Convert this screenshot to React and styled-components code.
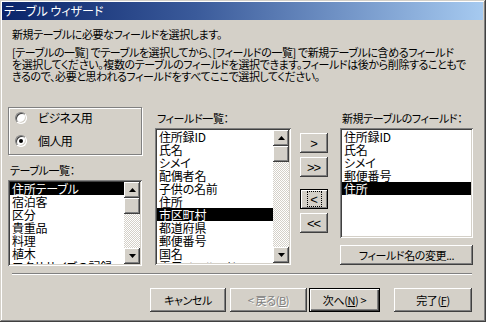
import React from "react"
import styled, { createGlobalStyle } from "styled-components"

const face = "#D4D0C8"

const GlobalStyle = createGlobalStyle`
  body {
    margin: 0;
    background: ${face};
  }
  * {
    box-sizing: border-box;
  }
`

const raised = `
  box-shadow: inset -1px -1px #404040, inset 1px 1px #ffffff, inset -2px -2px #808080, inset 2px 2px ${face};
`
const sunken = `
  box-shadow: inset 1px 1px #808080, inset -1px -1px #ffffff, inset 2px 2px #404040, inset -2px -2px ${face};
`

const tableItems = ["住所テーブル", "宿泊客", "区分", "貴重品", "料理", "植木", "エクササイズの記録"]
const fieldItems = ["住所録ID", "氏名", "シメイ", "配偶者名", "子供の名前", "住所", "市区町村", "都道府県", "郵便番号", "国名", "電子メールアドレス"]
const newItems = ["住所録ID", "氏名", "シメイ", "郵便番号", "住所"]

function Arrow({ down }) {
    return (
        <svg width="7" height="4" viewBox="0 0 7 4">
            <polygon points={down ? "0,0 7,0 3.5,4" : "0,4 7,4 3.5,0"} fill="#000" />
        </svg>
    )
}

function List({ items, selected, height }) {
    return (
        <ListBox $height={height}>
            <Items>
                {items.map((item, i) => (
                    <Item key={i} $selected={i === selected}>{item}</Item>
                ))}
            </Items>
            <ScrollBar>
                <ScrollButton><Arrow /></ScrollButton>
                <Thumb />
                <Track />
                <ScrollButton><Arrow down /></ScrollButton>
            </ScrollBar>
        </ListBox>
    )
}

export default function App() {
    return (
        <>
            <GlobalStyle />
            <Window>
                <TitleBar>テーブル ウィザード</TitleBar>
                <Body>
                    <Heading>新規テーブルに必要なフィールドを選択します。</Heading>
                    <Description>
                        [テーブルの一覧] でテーブルを選択してから、[フィールドの一覧] で新規テーブルに含めるフィールド<br />
                        を選択してください。複数のテーブルのフィールドを選択できます。フィールドは後から削除することもで<br />
                        きるので、必要と思われるフィールドをすべてここで選択してください。
                    </Description>
                    <Main>
                        <Column $width={134}>
                            <OptionGroup>
                                <RadioRow><Radio />ビジネス用</RadioRow>
                                <RadioRow><Radio $checked />個人用</RadioRow>
                            </OptionGroup>
                            <Label $top={9}>テーブル一覧：</Label>
                            <List items={tableItems} selected={0} height={86} />
                        </Column>
                        <Column $width={136} $left={13}>
                            <Label $top={5}>フィールド一覧：</Label>
                            <List items={fieldItems} selected={6} height={137} />
                        </Column>
                        <MoveButtons>
                            <MoveButton>&gt;</MoveButton>
                            <MoveButton>&gt;&gt;</MoveButton>
                            <MoveButton $focused $gap={12}><Focus>&lt;</Focus></MoveButton>
                            <MoveButton>&lt;&lt;</MoveButton>
                        </MoveButtons>
                        <Column $width={133} $left={12}>
                            <Label $top={5}>新規テーブルのフィールド：</Label>
                            <NewList>
                                {newItems.map((item, i) => (
                                    <Item key={i} $selected={i === 4}>{item}</Item>
                                ))}
                            </NewList>
                            <WideButton>フィールド名の変更...</WideButton>
                        </Column>
                    </Main>
                    <Separator />
                    <ButtonRow>
                        <Button $width={76} $gap={4}>キャンセル</Button>
                        <Button $width={77} $gap={2} $disabled>&lt; 戻る(<u>B</u>)</Button>
                        <Button $width={71} $gap={14} $default>次へ(<u>N</u>) &gt;</Button>
                        <Button $width={78}>完了(<u>F</u>)</Button>
                    </ButtonRow>
                </Body>
            </Window>
        </>
    )
}

const Window = styled.div`
    width: 486px;
    height: 322px;
    padding: 2px 3px 3px 2px;
    background: ${face};
    box-shadow: inset -1px -1px #404040, inset 1px 1px ${face}, inset -2px -2px #808080, inset 2px 2px #ffffff;
    font-family: "Noto Sans CJK JP", "Noto Sans", sans-serif;
    font-size: 11px;
    letter-spacing: -0.4px;
    font-feature-settings: "palt";
    color: #000;
    display: flex;
    flex-direction: column;
`

const TitleBar = styled.div`
    height: 18px;
    line-height: 18px;
    padding-left: 2px;
    font-size: 12px;
    letter-spacing: 0;
    color: #ffffff;
    background: linear-gradient(90deg, #0A246A 0%, #3A5A9A 40%, #A6CAF0 100%);
    white-space: nowrap;
`

const Body = styled.div`
    flex: 1;
    display: flex;
    flex-direction: column;
    padding: 8px 10px 0 6px;
`

const Heading = styled.p`
    margin: 0 0 6px 4px;
    line-height: 12px;
    white-space: nowrap;
`

const Description = styled.p`
    margin: 0 0 0 4px;
    line-height: 12px;
    white-space: nowrap;
`

const Main = styled.div`
    display: flex;
    align-items: flex-start;
    margin-top: 25px;
`

const Column = styled.div`
    width: ${(props) => props.$width}px;
    margin-left: ${(props) => props.$left || 0}px;
    display: flex;
    flex-direction: column;
`

const OptionGroup = styled.div`
    height: 48px;
    border: 1px solid #808080;
    box-shadow: inset 1px 1px #ffffff, 1px 1px #ffffff;
    padding: 1px 0 0 6px;
    display: flex;
    flex-direction: column;
    gap: 6px;
`

const RadioRow = styled.div`
    height: 17px;
    display: flex;
    align-items: center;
    white-space: nowrap;
    font-size: 12px;
    letter-spacing: -0.6px;
`

const Radio = styled.span`
    width: 12px;
    height: 12px;
    margin-right: 11px;
    border-radius: 50%;
    background: #ffffff;
    border: 1px solid;
    border-color: #808080 #ffffff #ffffff #808080;
    box-shadow: inset 1px 1px #404040, inset -1px -1px ${face};
    position: relative;
    flex-shrink: 0;
    &::after {
        content: "";
        display: ${(props) => props.$checked ? "block" : "none"};
        position: absolute;
        left: 3px;
        top: 3px;
        width: 4px;
        height: 4px;
        border-radius: 50%;
        background: #000;
    }
`

const Label = styled.div`
    margin: ${(props) => props.$top}px 0 4px 2px;
    line-height: 12px;
    white-space: nowrap;
`

const ListBox = styled.div`
    height: ${(props) => props.$height}px;
    padding: 2px;
    background: #ffffff;
    ${sunken}
    display: flex;
`

const Items = styled.div`
    flex: 1;
    overflow: hidden;
`

const Item = styled.div`
    height: 13px;
    line-height: 13px;
    padding-left: 2px;
    font-size: 12px;
    letter-spacing: -0.2px;
    white-space: nowrap;
    background: ${(props) => props.$selected ? "#000000" : "transparent"};
    color: ${(props) => props.$selected ? "#ffffff" : "#000000"};
`

const ScrollBar = styled.div`
    width: 16px;
    display: flex;
    flex-direction: column;
`

const ScrollButton = styled.div`
    height: 16px;
    background: ${face};
    ${raised}
    display: flex;
    align-items: center;
    justify-content: center;
`

const Thumb = styled.div`
    height: 16px;
    background: ${face};
    ${raised}
`

const Track = styled.div`
    flex: 1;
    background-image: repeating-conic-gradient(${face} 0 25%, #ffffff 0 50%);
    background-size: 2px 2px;
`

const NewList = styled.div`
    height: 110px;
    padding: 2px;
    background: #ffffff;
    ${sunken}
    overflow: hidden;
`

const MoveButtons = styled.div`
    width: 28px;
    margin: 26px 0 0 9px;
    display: flex;
    flex-direction: column;
`

const MoveButton = styled.div`
    height: 20px;
    margin-top: ${(props) => props.$gap || 4}px;
    &:first-child {
        margin-top: 0;
    }
    background: ${face};
    ${(props) => props.$focused
        ? "border: 1px solid #000; box-shadow: inset 1px 1px #ffffff, inset -1px -1px #808080;"
        : raised}
    display: flex;
    align-items: center;
    justify-content: center;
    font-family: "Liberation Sans", sans-serif;
    font-size: 13px;
    letter-spacing: -1px;
    padding-right: 1px;
`

const Focus = styled.span`
    width: 13px;
    height: 14px;
    margin-left: 1px;
    outline: 1px dotted #000;
    display: flex;
    align-items: center;
    justify-content: center;
    letter-spacing: 0;
`

const WideButton = styled.div`
    height: 20px;
    margin-top: 7px;
    background: ${face};
    ${raised}
    display: flex;
    align-items: center;
    justify-content: center;
    white-space: nowrap;
`

const Separator = styled.div`
    height: 2px;
    margin: 7px 1px 0 4px;
    border-top: 1px solid #808080;
    border-bottom: 1px solid #ffffff;
`

const ButtonRow = styled.div`
    display: flex;
    justify-content: flex-end;
    margin-top: 13px;
    padding-right: 1px;
`

const Button = styled.div`
    width: ${(props) => props.$width}px;
    height: 24px;
    margin-right: ${(props) => props.$gap || 0}px;
    background: ${face};
    ${(props) => props.$default
        ? "border: 1px solid #000; box-shadow: inset 1px 1px #ffffff, inset -1px -1px #404040, inset -2px -2px #808080;"
        : raised}
    display: flex;
    align-items: center;
    justify-content: center;
    white-space: nowrap;
    color: ${(props) => props.$disabled ? "#808080" : "#000"};
    text-shadow: ${(props) => props.$disabled ? "1px 1px #ffffff" : "none"};
`
